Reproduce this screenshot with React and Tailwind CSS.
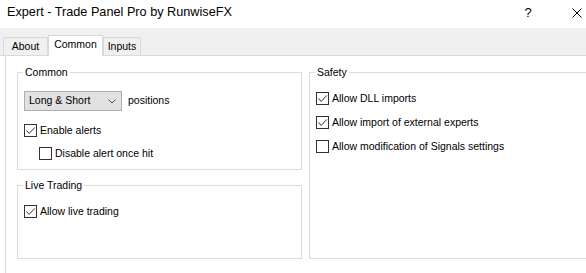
import React from 'react';

const font = "font-['Liberation_Sans',Arial,sans-serif]";

const Check = ({ checked }) => (
  <span className="w-[13px] h-[13px] shrink-0 border border-[#333333] bg-white flex items-center justify-center">
    {checked && (
      <svg width="11" height="11" viewBox="0 0 11 11" fill="none">
        <path d="M1.3 5.4 L4.2 8.4 L9.8 2.4" stroke="#333333" strokeWidth="1" />
      </svg>
    )}
  </span>
);

const CheckRow = ({ checked, label, className = '' }) => (
  <div className={`flex items-center gap-[3px] h-[13px] ${className}`}>
    <Check checked={checked} />
    <span className="text-[10.5px] leading-[13px] text-black whitespace-nowrap">{label}</span>
  </div>
);

const Group = ({ title, className = '', children }) => (
  <div className={`relative border border-[#dcdcdc] ${className}`}>
    <span className="absolute -top-[7px] left-[5px] bg-white px-[2px] text-[10.5px] leading-[13px] text-black">
      {title}
    </span>
    {children}
  </div>
);

const Tab = ({ label, active, className = '' }) =>
  active ? (
    <div className={`h-[21px] -mb-[1px] bg-white border border-b-0 border-[#d9d9d9] flex items-center justify-center text-[10.5px] text-black relative z-10 ${className}`}>
      <span className="-mt-[2px]">{label}</span>
    </div>
  ) : (
    <div className={`h-[18px] bg-[#f0f0f0] border border-b-0 border-[#d9d9d9] flex items-center justify-center text-[10.5px] text-black ${className}`}>
      {label}
    </div>
  );

export default function App() {
  return (
    <div className={`w-[586px] h-[273px] overflow-hidden bg-white flex flex-col ${font}`}>
      {/* Title bar */}
      <div className="h-[28px] shrink-0 flex items-center justify-between pl-[7px]">
        <span className="text-[12.7px] text-black -mt-[2px]">Expert - Trade Panel Pro by RunwiseFX</span>
        <div className="flex items-center -mt-[2px]">
          <span className="text-[13px] text-black w-[10px] text-center">?</span>
          <span className="w-[10px] h-[10px] ml-[39px] mr-[4px] flex">
            <svg width="10" height="10" viewBox="0 0 10 10">
              <path d="M0.5 0.5 L9.5 9.5 M9.5 0.5 L0.5 9.5" stroke="#000" strokeWidth="1" />
            </svg>
          </span>
        </div>
      </div>

      {/* Tab strip */}
      <div className="h-[28px] shrink-0 bg-[#f0f0f0] border-b border-[#d9d9d9] flex items-end pl-[3px]">
        <Tab label="About" className="w-[45px]" />
        <Tab label="Common" active className="w-[55px]" />
        <Tab label="Inputs" className="w-[38px]" />
      </div>

      {/* Page */}
      <div className="flex-1 bg-white flex">
        <div className="ml-[5px] flex-1 bg-white border-l border-[#d9d9d9] pt-[16px] pl-[11px] flex gap-[7px]">
          <div className="w-[285px] shrink-0 flex flex-col">
            <Group title="Common" className="h-[98px] pt-[18px] pl-[6px]">
              <div className="flex items-center">
                <div className="w-[98px] h-[20px] bg-[#e1e1e1] border border-[#adadad] flex items-center justify-between pl-[4px] pr-[5px]">
                  <span className="text-[10.5px] text-black">Long &amp; Short</span>
                  <svg width="8" height="5" viewBox="0 0 8 5">
                    <path d="M0.5 0.5 L4 4 L7.5 0.5" stroke="#555" strokeWidth="1" fill="none" />
                  </svg>
                </div>
                <span className="ml-[6px] text-[10.5px] text-black">positions</span>
              </div>
              <CheckRow checked label="Enable alerts" className="mt-[13px]" />
              <CheckRow label="Disable alert once hit" className="mt-[10px] ml-[15px]" />
            </Group>
            <Group title="Live Trading" className="h-[74px] mt-[15px] pt-[19px] pl-[6px]">
              <CheckRow checked label="Allow live trading" />
            </Group>
          </div>
          <div className="w-[320px] shrink-0">
            <Group title="Safety" className="h-[187px] pt-[19px] pl-[6px] flex flex-col gap-[11px]">
              <CheckRow checked label="Allow DLL imports" />
              <CheckRow checked label="Allow import of external experts" />
              <CheckRow label="Allow modification of Signals settings" />
            </Group>
          </div>
        </div>
      </div>
    </div>
  );
}
